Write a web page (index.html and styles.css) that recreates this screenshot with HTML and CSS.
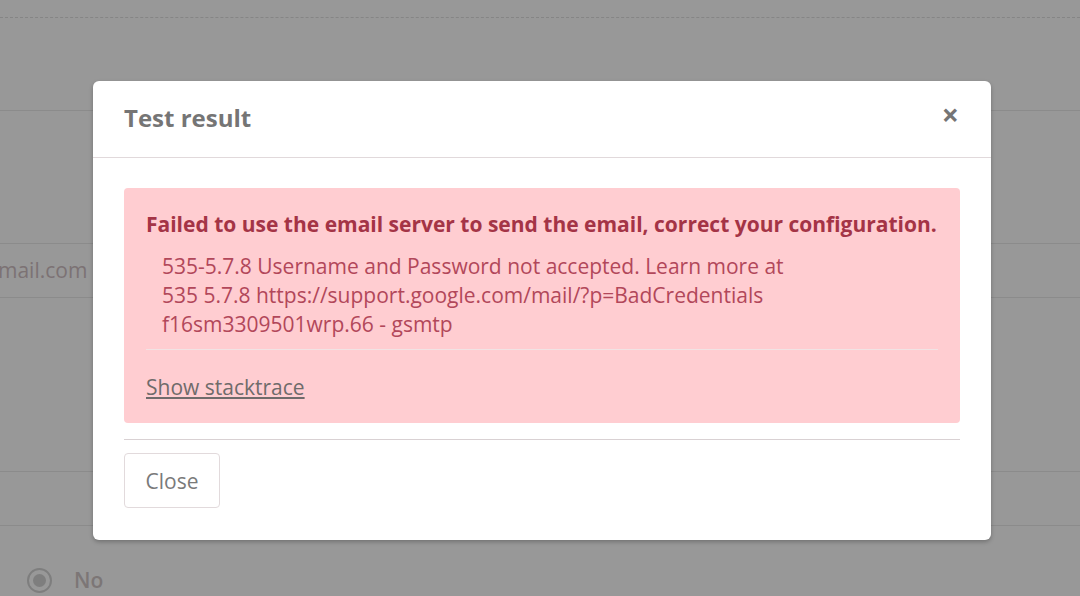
FILE: index.html
```html
<!DOCTYPE html>
<html>
<head>
<meta charset="utf-8">
<link rel="stylesheet" href="styles.css">
</head>
<body>
<div class="page">
  <div class="row r1"></div>
  <div class="row r2"></div>
  <div class="row r3"></div>
  <div class="row r4"><span class="email">mail.com</span></div>
  <div class="row r5"></div>
  <div class="row r6"></div>
  <div class="row r7">
    <span class="radio"><span class="dot"></span></span>
    <span class="radio-label">No</span>
  </div>
</div>

<div class="modal">
  <div class="modal-header">
    <h4 class="modal-title">Test result</h4>
    <span class="close-x">&times;</span>
  </div>
  <div class="modal-body">
    <div class="alert">
      <div class="alert-title">Failed to use the email server to send the email, correct your configuration.</div>
      <div class="alert-msg">535-5.7.8 Username and Password not accepted. Learn more at
535 5.7.8 https://support.google.com/mail/?p=BadCredentials
f16sm3309501wrp.66 - gsmtp</div>
      <hr class="alert-sep">
      <a class="alert-link" href="#">Show stacktrace</a>
    </div>
    <div class="footer">
      <button class="btn">Close</button>
    </div>
  </div>
</div>
</body>
</html>
```

FILE: styles.css
```css
html, body {
  margin: 0;
  padding: 0;
}
body {
  width: 1080px;
  height: 596px;
  overflow: hidden;
  background: #989898;
  font-family: "Open Sans", "Liberation Sans", sans-serif;
  position: relative;
}
.page {
  display: flex;
  flex-direction: column;
}
.row {
  border-bottom: 1px solid #8b8b8b;
  box-sizing: border-box;
}
.r1 { height: 18px; border-bottom: 1px dashed #858585; }
.r2 { height: 93px; }
.r3 { height: 133px; }
.r4 { height: 54px; display: flex; align-items: center; }
.r5 { height: 174px; }
.r6 { height: 54px; }
.r7 {
  border-bottom: none;
  height: 70px;
  display: flex;
  align-items: center;
  padding-left: 27px;
  padding-top: 42px;
  align-items: flex-start;
}
.email {
  font-size: 21px;
  color: #7c7274;
  margin-left: -2px;
  margin-top: -2px;
}
.radio {
  width: 25px;
  height: 25px;
  box-sizing: border-box;
  border: 2px solid #7e7e7e;
  border-radius: 50%;
  display: flex;
  align-items: center;
  justify-content: center;
}
.dot {
  width: 13px;
  height: 13px;
  border-radius: 50%;
  background: #7e7e7e;
}
.radio-label {
  margin-left: 22px;
  font-size: 21px;
  font-weight: 600;
  color: #7c7676;
  line-height: 25px;
}

.modal {
  position: absolute;
  left: 93px;
  top: 81px;
  width: 898px;
  background: #fff;
  border-radius: 6px;
  box-shadow: 0 2px 4px rgba(0,0,0,0.25);
}
.modal-header {
  display: flex;
  align-items: center;
  justify-content: space-between;
  padding: 0 31px;
  height: 76px;
  border-bottom: 1px solid #e1d9db;
}
.modal-title {
  margin: 0;
  font-size: 24px;
  font-weight: 700;
  color: #757575;
  line-height: 30px;
  margin-top: -2px;
}
.close-x {
  font-size: 30px;
  font-weight: 700;
  color: #757575;
  line-height: 1;
  margin-right: 1px;
  margin-top: -8px;
}
.modal-body {
  padding: 30px 31px 32px 31px;
}
.alert {
  background: #ffcdd1;
  border-radius: 4px;
  padding: 22px 22px 23px 22px;
}
.alert-title {
  font-size: 21px;
  font-weight: 700;
  color: #a43446;
  line-height: 28px;
}
.alert-msg {
  white-space: pre-line;
  font-size: 21px;
  line-height: 29px;
  color: #b2475a;
  padding-left: 16px;
  margin-top: 14px;
}
.alert-sep {
  border: none;
  border-top: 1px solid #f1e3e4;
  margin: 10px 0 24px 0;
}
.alert-link {
  display: block;
  font-size: 21px;
  color: #6f6b6b;
  text-decoration: underline;
  line-height: 26px;
}
.footer {
  margin-top: 16px;
  border-top: 1px solid #d9d1d3;
  padding-top: 13px;
}
.btn {
  display: block;
  width: 96px;
  height: 55px;
  background: #fff;
  border: 1px solid #e2dadc;
  border-radius: 4px;
  font-family: "Open Sans", "Liberation Sans", sans-serif;
  font-size: 21px;
  color: #7a7a7a;
  padding: 0;
}
```
